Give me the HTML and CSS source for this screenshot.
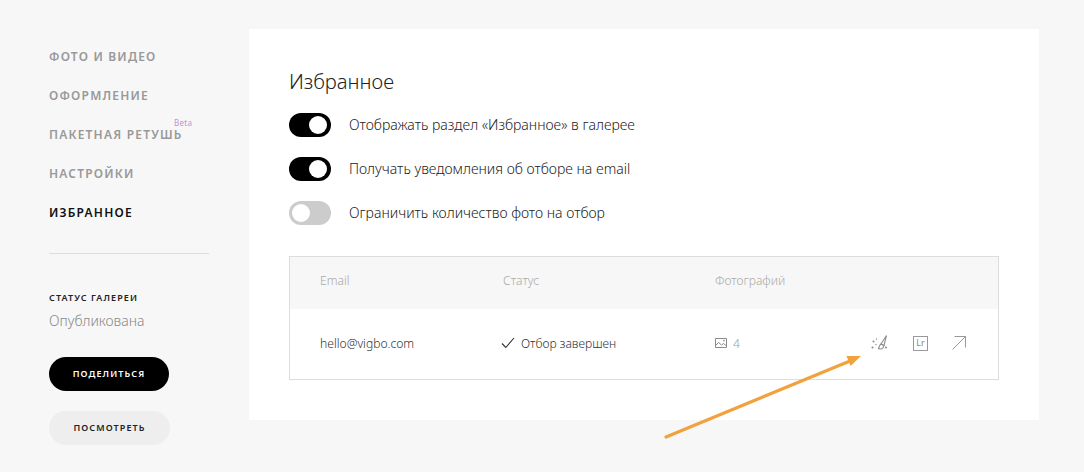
FILE: index.html
```html
<!DOCTYPE html>
<html lang="en">
  <head>
    <meta charset="UTF-8" />
    <meta name="viewport" content="width=device-width, initial-scale=1.0" />
    <title>Избранное</title>
    <link rel="stylesheet" href="styles.css">
  </head>
  <body>
    <div class="page">
      <aside class="sidebar">
        <nav class="nav">
          <a class="nav-item">Фото и видео</a>
          <a class="nav-item">Оформление</a>
          <a class="nav-item">Пакетная ретушь<span class="beta">Beta</span></a>
          <a class="nav-item">Настройки</a>
          <a class="nav-item active">Избранное</a>
        </nav>
        <div class="divider"></div>
        <div class="status-label">Статус галереи</div>
        <div class="status-value">Опубликована</div>
        <button class="btn btn-black">Поделиться</button>
        <button class="btn btn-grey">Посмотреть</button>
      </aside>

      <main class="panel">
        <h1 class="title">Избранное</h1>
        <div class="option">
          <span class="toggle on"></span>
          <span class="option-text">Отображать раздел «Избранное» в галерее</span>
        </div>
        <div class="option">
          <span class="toggle on"></span>
          <span class="option-text">Получать уведомления об отборе на email</span>
        </div>
        <div class="option">
          <span class="toggle"></span>
          <span class="option-text">Ограничить количество фото на отбор</span>
        </div>

        <div class="table">
          <div class="row head">
            <div class="col-email">Email</div>
            <div class="col-status">Статус</div>
            <div class="col-photos">Фотографий</div>
          </div>
          <div class="row body-row">
            <div class="col-email">hello@vigbo.com</div>
            <div class="col-status status-done">
              <svg class="check" width="14" height="12" viewBox="0 0 14 12"><path d="M1 6.5 L4.8 10.5 L13 1" fill="none" stroke="#333" stroke-width="1.1"/></svg>
              Отбор завершен
            </div>
            <div class="col-photos photo-count">
              <svg width="12" height="10" viewBox="0 0 12 10"><path d="M.5.5h11v9H.5z M.5 7.5 L3.5 4.5 L6.5 7 L8.5 5.5 L11.5 8" fill="none" stroke="#8a8a8a" stroke-width="1"/><circle cx="9" cy="2.6" r=".8" fill="#8a8a8a"/></svg>
              <span>4</span>
            </div>
            <div class="actions">
              <svg width="18" height="16" viewBox="0 0 18 16"><g fill="none" stroke="#8f8f8f" stroke-width="1.1"><path d="M15.5 .5 L10 9 L13 10.5 Z"/><path d="M10 9 C8.5 10 8 12.5 7.5 13.5 C9.5 14.5 12.5 14 13 10.5 Z"/></g><g fill="#8a8a8a"><circle cx="2.5" cy="6.5" r="1"/><circle cx="5.5" cy="4" r=".7"/><circle cx="1.5" cy="12.5" r="1"/><circle cx="5" cy="9.5" r=".7"/><circle cx="15" cy="12.5" r="1"/></g></svg>
              <span class="lr">Lr</span>
              <svg width="14" height="14" viewBox="0 0 14 14"><path d="M.5 13.5 L13.5.5 M2.5.5 H13.5 V11.5" fill="none" stroke="#999" stroke-width="1"/></svg>
            </div>
          </div>
        </div>
      </main>
    </div>

    <svg class="arrow" width="210" height="95" viewBox="0 0 210 95">
      <path d="M6 87 L190 11" stroke="#f2a23c" stroke-width="3.2" stroke-linecap="round" fill="none"/>
      <path d="M201 6 L186.5 6 L190.5 16 Z" fill="#f2a23c"/>
    </svg>
  </body>
</html>
```

FILE: styles.css
```css
* {
  margin: 0;
  padding: 0;
  box-sizing: border-box;
}
html,
body {
  width: 100%;
  height: 100%;
  overflow: hidden;
}
body {
  background-color: #f7f7f7;
  color: #222;
  font-family: "Noto Sans", "Open Sans", sans-serif;
  position: relative;
}
.page {
  display: flex;
  padding: 29px 45px 0 49px;
}

.sidebar {
  width: 160px;
  margin-right: 40px;
  flex-shrink: 0;
  display: flex;
  flex-direction: column;
  align-items: flex-start;
}
.nav {
  display: flex;
  flex-direction: column;
  gap: 25px;
  padding-top: 21px;
}
.nav-item {
  position: relative;
  display: block;
  height: 14px;
  line-height: 14px;
  font-size: 12px;
  font-weight: 600;
  letter-spacing: 1.2px;
  text-transform: uppercase;
  color: #999;
  white-space: nowrap;
}
.nav-item.active {
  color: #111;
}
.beta {
  position: absolute;
  left: 125px;
  top: -9px;
  font-size: 8px;
  line-height: 8px;
  font-weight: 400;
  letter-spacing: 0.3px;
  text-transform: none;
  color: #c58fd6;
}
.divider {
  width: 160px;
  height: 1px;
  background-color: #ddd;
  margin-top: 33px;
}
.status-label {
  margin-top: 38px;
  font-size: 9px;
  line-height: 12px;
  font-weight: 600;
  letter-spacing: 1.1px;
  text-transform: uppercase;
  color: #222;
}
.status-value {
  margin-top: 8px;
  font-size: 14px;
  line-height: 18px;
  font-weight: 300;
  color: #888;
}
.btn {
  border: none;
  height: 34px;
  border-radius: 17px;
  padding-bottom: 2px;
  font-family: inherit;
  font-size: 9px;
  font-weight: 600;
  letter-spacing: 1.1px;
  text-transform: uppercase;
  cursor: pointer;
}
.btn-black {
  width: 120px;
  margin-top: 27px;
  background-color: #000;
  color: #fff;
}
.btn-grey {
  width: 121px;
  margin-top: 20px;
  background-color: #eee;
  color: #222;
}

.panel {
  flex: 1;
  height: 391px;
  background-color: #fff;
  padding: 39px 40px 0;
}
.title {
  font-size: 20.2px;
  line-height: 26px;
  font-weight: 300;
  color: #222;
  margin-bottom: 19px;
}
.option {
  display: flex;
  align-items: center;
  gap: 18px;
  height: 24px;
  margin-bottom: 20px;
  font-size: 14.05px;
  font-weight: 300;
  color: #222;
}
.option-text {
  padding-bottom: 2px;
}
.toggle {
  position: relative;
  width: 42px;
  height: 24px;
  border-radius: 12px;
  background-color: #ccc;
  flex-shrink: 0;
}
.toggle.on {
  background-color: #000;
}
.toggle::after {
  content: "";
  position: absolute;
  top: 3px;
  left: 3px;
  width: 18px;
  height: 18px;
  border-radius: 50%;
  background-color: #fff;
}
.toggle.on::after {
  left: 20px;
}

.table {
  margin-top: 31px;
  border: 1px solid #ddd;
  font-size: 12.1px;
}
.row {
  display: flex;
  align-items: center;
  padding-left: 30px;
}
.head {
  height: 52px;
  padding-bottom: 5px;
  background-color: #f7f7f7;
  color: #aaa;
  font-weight: 300;
}
.body-row {
  height: 70px;
  padding-bottom: 2px;
  color: #333;
  font-weight: 300;
}
.col-email {
  width: 183px;
}
.col-status {
  width: 212px;
}
.col-photos {
  width: 156px;
}
.status-done {
  display: flex;
  align-items: center;
  gap: 6px;
  margin-left: -2px;
  margin-right: 2px;
}
.photo-count {
  display: flex;
  align-items: center;
  gap: 6px;
  color: #8fa0b5;
}
.actions {
  display: flex;
  align-items: center;
  gap: 24px;
  color: #888;
}
.lr {
  width: 15px;
  height: 15px;
  border: 1px solid #999;
  font-size: 9px;
  font-weight: 400;
  line-height: 12px;
  text-align: center;
}

.arrow {
  position: absolute;
  left: 660px;
  top: 350px;
}
```
